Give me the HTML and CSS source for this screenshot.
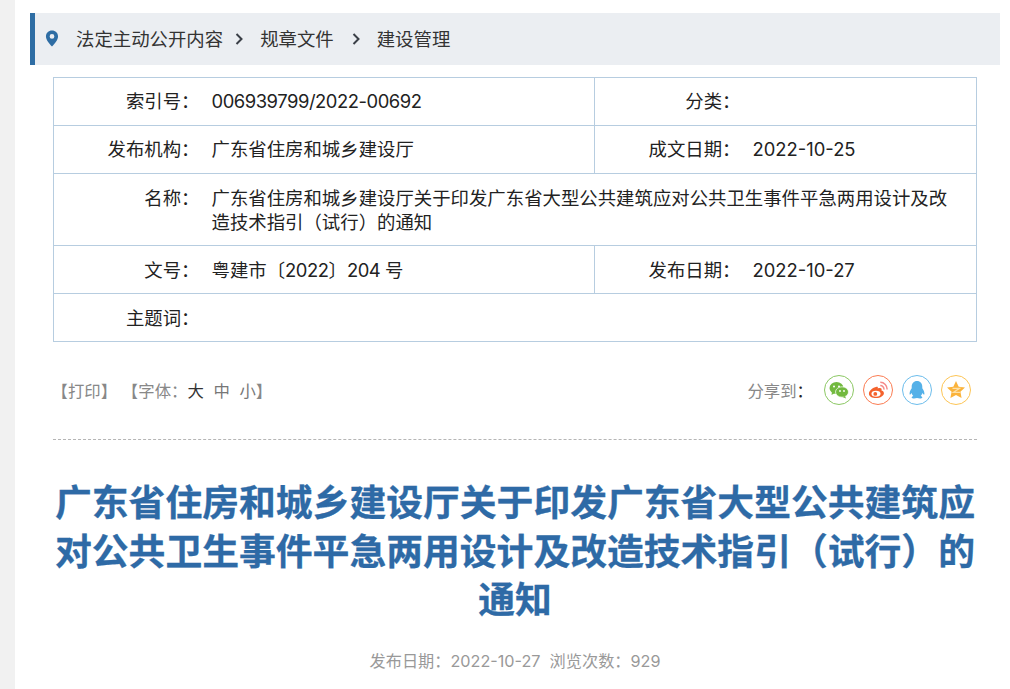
FILE: index.html
```html
<!DOCTYPE html>
<html lang="zh-CN">
<head>
<meta charset="utf-8">
<title>规章文件</title>
<link rel="stylesheet" href="styles.css">
</head>
<body>
<main class="page">
  <nav class="crumb">
    <svg class="pin" viewBox="0 0 14 18" width="14" height="17"><path fill="#2e6da4" fill-rule="evenodd" d="M7 .5C3.300.5.600 3.200.600 6.800c0 3.600 3.600 7.600 6.400 10.700 2.800-3.100 6.400-7.100 6.400-10.700C13.400 3.200 10.700.5 7 .5zM7 4.300a2.500 2.500 0 1 1 0 5 2.500 2.500 0 0 1 0-5z"/></svg>
    <a class="c1">法定主动公开内容</a>
    <svg class="chev c2" viewBox="0 0 8 12" width="8" height="12"><path d="M1.500 1l5 5-5 5" fill="none" stroke="#3a3f47" stroke-width="2"/></svg>
    <a class="c3">规章文件</a>
    <svg class="chev c4" viewBox="0 0 8 12" width="8" height="12"><path d="M1.500 1l5 5-5 5" fill="none" stroke="#3a3f47" stroke-width="2"/></svg>
    <a class="c5">建设管理</a>
  </nav>
  <section class="article">
    <table class="meta">
      <colgroup><col class="k1"><col class="v1"><col class="k2"><col class="v2"></colgroup>
      <tr><th>索引号：</th><td class="tight">006939799/2022-00692</td><th class="sep">分类：</th><td></td></tr>
      <tr><th>发布机构：</th><td>广东省住房和城乡建设厅</td><th class="sep">成文日期：</th><td>2022-10-25</td></tr>
      <tr class="tall"><th>名称：</th><td colspan="3">广东省住房和城乡建设厅关于印发广东省大型公共建筑应对公共卫生事件平急两用设计及改造技术指引（试行）的通知</td></tr>
      <tr><th>文号：</th><td>粤建市〔<span class="tight">2022</span>〕<span class="tight">204 </span>号</td><th class="sep">发布日期：</th><td>2022-10-27</td></tr>
      <tr><th>主题词：</th><td colspan="3"></td></tr>
    </table>
    <div class="tools">
      <div class="left"><span class="group">【打印】</span><span>【字体：<span class="size on">大</span><span class="size">中</span><span class="size">小</span>】</span></div>
      <div class="share">
        <span class="share-label">分享到<b>：</b></span>
        <span class="ico wx"><svg viewBox="0 0 20 20" width="20" height="20"><ellipse cx="7.500" cy="8" rx="7" ry="6" fill="#72b93f"/><path d="M3 12l-.5 3 3.500-2z" fill="#72b93f"/><ellipse cx="13" cy="12" rx="6.500" ry="5.200" fill="#72b93f" stroke="#fff" stroke-width=".7"/><path d="M16 16l1 2.500-3.500-1.500z" fill="#72b93f"/><circle cx="5" cy="6.500" r="1" fill="#fff"/><circle cx="10" cy="6.500" r="1" fill="#fff"/><circle cx="11" cy="11" r=".9" fill="#fff"/><circle cx="15" cy="11" r=".9" fill="#fff"/></svg></span>
        <span class="ico wb"><svg viewBox="0 0 22 20" width="22" height="20"><path d="M9.500 6.500C5 7.500 1 11 1 14c0 2.800 3.600 4.800 7.800 4.800 5 0 8.700-2.700 8.700-5.300 0-1.700-1.500-2.500-2.700-2.900.8-2.200-.6-3-2.300-2.700-1 .2-1.800.6-1.800.6.500-1.700-.2-2.400-1.200-2z" fill="#f4622d"/><ellipse cx="8.800" cy="14" rx="5" ry="3.300" fill="#fff"/><circle cx="8" cy="14.300" r="2.100" fill="#f4622d"/><path d="M13.500 5a4 4 0 0 1 4 4.500M13.500 1.500a7.500 7.500 0 0 1 7.500 8" fill="none" stroke="#f58a8a" stroke-width="1.600"/></svg></span>
        <span class="ico qq"><svg viewBox="0 0 20 20" width="20" height="20"><path d="M10 1c-3.300 0-5.300 2.500-5.300 5.700v1.600C3.300 10.300 2.300 12.500 2.600 14.500c.8.300 1.500-.7 2-1.500.3 1.300 1 2.300 1.700 3-.9.400-1.800 1-1.600 1.800.3.900 3.300.9 5.300.3 2 .6 5 .6 5.300-.3.200-.8-.7-1.400-1.600-1.800.7-.7 1.400-1.700 1.700-3 .5.800 1.200 1.800 2 1.500.3-2-.7-4.200-2.100-6.200V6.700C15.300 3.500 13.300 1 10 1z" fill="#55b1e8"/></svg></span>
        <span class="ico qz"><svg viewBox="0 0 20 20" width="20" height="20"><path d="M10 1l2.700 5.700 6.300.8-4.600 4.300 1.200 6.200-5.600-3.100-5.600 3.100 1.200-6.200L1 7.500l6.300-.8z" fill="#fbb33b"/><path d="M6.500 8.300h7l-6 4h6.500" fill="none" stroke="#fde0a8" stroke-width="1.300"/></svg></span>
      </div>
    </div>
    <h1 class="title">广东省住房和城乡建设厅关于印发广东省大型公共建筑应对公共卫生事件平急两用设计及改造技术指引（试行）的通知</h1>
    <p class="info">发布日期：2022-10-27&nbsp;&nbsp;浏览次数：929</p>
  </section>
</main>
</body>
</html>
```
FILE: styles.css
```css
* { box-sizing: border-box; }
html, body { margin: 0; height: 100%; }
body {
  background: #fff;
  font-family: Inter, "Noto Sans CJK SC", "Noto Sans", sans-serif;
  color: #333;
  overflow: hidden;
}
.page {
  margin-left: 15px;
  height: 689px;
  padding: 13px 10px 0 15px;
  position: relative;
  box-shadow: -15px 0 0 #f1f1f1;
}
.crumb {
  height: 52px;
  background: #ebeef2;
  border-left: 5px solid #2e6da4;
  display: flex;
  align-items: center;
  font-size: 18.4px;
  color: #333;
}
.crumb a { margin-bottom: 2px; }
.pin { margin-left: 10px; margin-top: -2px; }
.c1 { margin-left: 17px; }
.chev { flex: none; }
.c2 { margin-left: 12px; }
.c3 { margin-left: 17px; }
.c4 { margin-left: 18px; }
.c5 { margin-left: 17px; }
.article { padding: 12px 23px 0; }
.meta {
  width: 924px;
  border-collapse: collapse;
  table-layout: fixed;
  border: 1px solid #b7cde0;
  font-size: 18.4px;
  line-height: 24px;
  color: #222;
}
.k1 { width: 147px; }
.v1 { width: 394px; }
.k2 { width: 147px; }
.meta tr { height: 48px; }
.meta tr.tall { height: 72px; }
.meta tr + tr { border-top: 1px solid #b7cde0; }
.meta th, .meta td { padding: 0; font-weight: 400; vertical-align: middle; }
.meta th { text-align: right; padding-right: 1px; }
.meta td { padding-left: 11px; padding-right: 24px; }
.meta tr:nth-child(-n+2) th, .meta tr:nth-child(-n+2) td { padding-bottom: 2px; }
.meta tr.tall th { vertical-align: top; padding-top: 12px; }
.meta th.sep { border-left: 1px solid #b7cde0; }
.tight { letter-spacing: -.45px; }
.tools {
  height: 98px;
  border-bottom: 1px dashed #b5b5b5;
  display: flex;
  justify-content: space-between;
  padding-top: 30px;
  font-size: 16.4px;
  color: #888;
}
.left { line-height: 38px; margin-left: -1.5px; }
.group { margin-right: 13px; }
.size { margin-right: 9.600px; color: #777; }
.size.on { color: #333; }
.size:last-of-type { margin-right: 0; }
.share { display: flex; align-items: flex-start; margin-right: 6px; }
.share-label { line-height: 38px; margin-right: 2px; }
.share-label b { color: #222; font-weight: 400; }
.ico {
  width: 30px;
  height: 30px;
  border-radius: 50%;
  border: 1px solid;
  margin-left: 9px;
  margin-top: 3px;
  display: flex;
  align-items: center;
  justify-content: center;
}
.ico svg { width: 20px; height: 20px; }
.wx { border-color: #8cc864; }
.wb { border-color: #fb7c52; }
.qq { border-color: #6cbdec; }
.qz { border-color: #fdc555; }
.title {
  margin: 0;
  padding-top: 39px;
  font-size: 36.8px;
  line-height: 48.500px;
  font-weight: 700;
  color: #2e6aa6;
  -webkit-text-stroke: .3px #2e6aa6;
  text-align: center;
}
.info {
  margin: 0;
  padding-top: 24.500px;
  font-size: 16.2px;
  line-height: 24px;
  color: #999;
  text-align: center;
}
```
